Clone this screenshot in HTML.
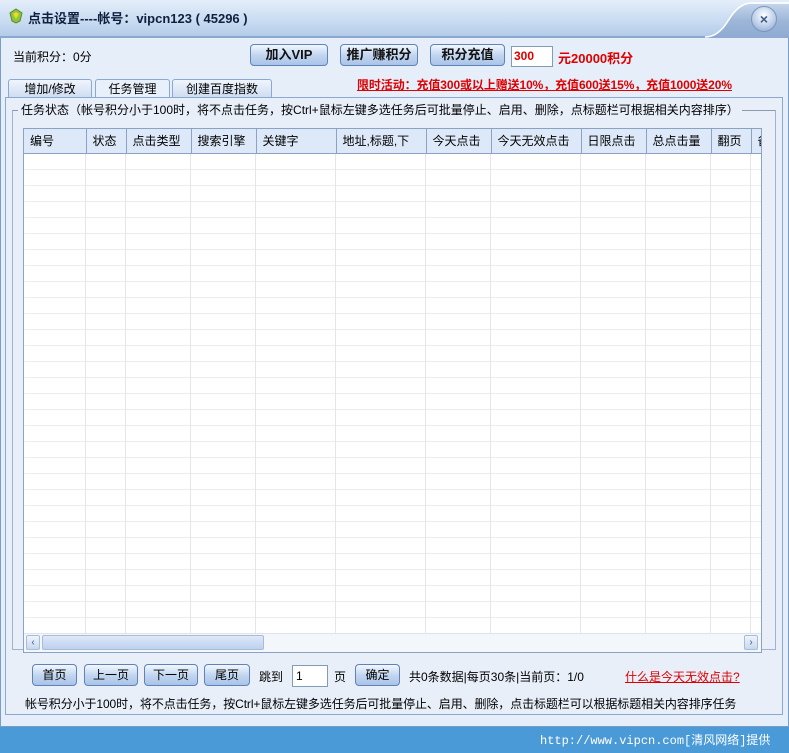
<!DOCTYPE html>
<html><head><meta charset="utf-8">
<style>
*{box-sizing:border-box;margin:0;padding:0}
body{width:789px;height:753px;position:relative;overflow:hidden;background:#4a9ad8;font-family:"Liberation Sans","Noto Sans CJK SC",sans-serif;font-size:12px;color:#000}
.a{position:absolute}
.win{left:0;top:0;width:789px;height:727px;background:#e6eefa;border:1px solid #7a9cc8}
.title{left:0;top:0;width:789px;height:38px;background:linear-gradient(#e4eefa,#c8dbf1 60%,#b4cbe8);border-bottom:2px solid #8aa8d0}
.btn{height:22px;border:1px solid #5f83b8;border-radius:4px;background:linear-gradient(#f2f7fe,#c3d6f0 50%,#a9c3e8);font-weight:bold;font-size:13px;text-align:center;line-height:20px;color:#111}
.pb{height:22px;border:1px solid #5f83b8;border-radius:4px;background:linear-gradient(#f2f7fe,#c3d6f0 50%,#a9c3e8);font-size:12px;text-align:center;line-height:20px}
.tab{top:79px;height:19px;border:1px solid #8aa8d0;border-bottom:none;border-radius:3px 3px 0 0;background:linear-gradient(#f0f5fc,#cddcf1);text-align:center;line-height:18px;font-size:12px}
.red{color:#d00;font-weight:bold}
table{border-collapse:collapse;table-layout:fixed}
td,th{border-right:1px solid #e6e6e6;border-bottom:1px solid #ececec;height:16px;padding:0}
th{height:24px;background:#dde9f9;border-right:1px solid #8aa2c4;border-bottom:1px solid #8aa2c4;font-weight:normal;text-align:left;padding-left:6px;font-size:12px;white-space:nowrap;overflow:hidden}
</style></head><body>
<div class="a win"></div>
<div class="a title"></div>
<svg class="a" style="left:610px;top:0" width="179" height="38"><defs><linearGradient id="g" x1="0" y1="0" x2="0" y2="1"><stop offset="0" stop-color="#c4d4ea"/><stop offset=".5" stop-color="#9db6d8"/><stop offset="1" stop-color="#8eaad2"/></linearGradient></defs><path d="M0 38 L95 38 Q108 38 118 22 Q128 5 140 4 L179 4 L179 38 Z" fill="url(#g)"/><path d="M95 37 Q108 37 118 21 Q128 4 140 3 L179 3" stroke="#fff" stroke-width="1.5" fill="none"/></svg>
<div class="a" style="left:751px;top:6px;width:26px;height:26px;border-radius:50%;background:radial-gradient(circle at 50% 35%,#fff,#b7cbe6 60%,#7f9cc6);border:1px solid #7a96c0;text-align:center;line-height:24px;font-weight:bold;color:#3b5a8a;font-size:14px">×</div>
<svg class="a" style="left:9px;top:8px" width="14" height="16"><path d="M7 1 L13 5 L11 13 L7 15 L3 13 L1 5Z" fill="#8cc63a" stroke="#5a8a20"/><path d="M7 4 L10 6 L7 11 L4 6Z" fill="#f4d23c"/></svg>
<div class="a" style="left:28px;top:8px;font-size:13px;font-weight:bold;color:#102040">点击设置----帐号：vipcn123 ( 45296 )</div>
<div class="a" style="left:13px;top:48px">当前积分：0分</div>
<div class="a btn" style="left:250px;top:44px;width:78px">加入VIP</div>
<div class="a btn" style="left:340px;top:44px;width:78px">推广赚积分</div>
<div class="a btn" style="left:430px;top:44px;width:75px">积分充值</div>
<div class="a" style="left:511px;top:46px;width:42px;height:21px;background:#fff;border:1px solid #7f9db9;color:#d00;font-weight:bold;padding:2px 2px;font-size:12px">300</div>
<div class="a red" style="left:558px;top:48px;font-size:13px">元20000积分</div>
<div class="a tab" style="left:8px;width:84px">增加/修改</div>
<div class="a tab" style="left:95px;width:75px;background:#e8f0fb">任务管理</div>
<div class="a tab" style="left:172px;width:100px">创建百度指数</div>
<div class="a red" style="left:357px;top:76px;text-decoration:underline;font-size:12px;letter-spacing:-.1px">限时活动：充值300或以上赠送10%，充值600送15%，充值1000送20%</div>
<div class="a" style="left:5px;top:97px;width:778px;height:618px;border:1px solid #8aa8d0;background:#e8eff9"></div>
<div class="a" style="left:12px;top:110px;width:764px;height:540px;border:1px solid #9fb4d2;border-top-color:#8a9ab0"></div>
<div class="a" style="left:18px;top:101px;background:#e8eff9;padding:0 3px;font-size:12px">任务状态（帐号积分小于100时，将不点击任务，按Ctrl+鼠标左键多选任务后可批量停止、启用、删除，点标题栏可根据相关内容排序）</div>
<div class="a" style="left:23px;top:128px;width:739px;height:525px;background:#fff;border:1px solid #8aa2c4;overflow:hidden">
<table style="width:760px">
<tr><th style="width:62px">编号</th><th style="width:40px">状态</th><th style="width:65px">点击类型</th><th style="width:65px">搜索引擎</th><th style="width:80px">关键字</th><th style="width:90px">地址,标题,下</th><th style="width:65px">今天点击</th><th style="width:90px">今天无效点击</th><th style="width:65px">日限点击</th><th style="width:65px">总点击量</th><th style="width:40px">翻页</th><th>备</th></tr>
<tr><td></td><td></td><td></td><td></td><td></td><td></td><td></td><td></td><td></td><td></td><td></td><td></td></tr>
</table>
<div class="a" style="left:0;top:25px;width:760px;height:480px;background:repeating-linear-gradient(#fff 0 15px,#ececec 15px 16px)"></div>
<svg class="a" style="left:0;top:25px" width="740" height="480"><g stroke="#e6e6e6"><line x1="61.5" y1="0" x2="61.5" y2="480"/><line x1="101.5" y1="0" x2="101.5" y2="480"/><line x1="166.5" y1="0" x2="166.5" y2="480"/><line x1="231.5" y1="0" x2="231.5" y2="480"/><line x1="311.5" y1="0" x2="311.5" y2="480"/><line x1="401.5" y1="0" x2="401.5" y2="480"/><line x1="466.5" y1="0" x2="466.5" y2="480"/><line x1="556.5" y1="0" x2="556.5" y2="480"/><line x1="621.5" y1="0" x2="621.5" y2="480"/><line x1="686.5" y1="0" x2="686.5" y2="480"/><line x1="726.5" y1="0" x2="726.5" y2="480"/></g></svg>
<div class="a" style="left:0;top:504px;width:739px;height:19px;background:#f3f6fb;border-top:1px solid #dde4ee"></div>
<div class="a" style="left:2px;top:506px;width:14px;height:15px;border:1px solid #a8bcd8;border-radius:2px;background:linear-gradient(#eef4fc,#c8d8ee);font-size:10px;line-height:13px;text-align:center;color:#3a5a8a">‹</div>
<div class="a" style="left:18px;top:506px;width:222px;height:15px;border:1px solid #a8bcd8;border-radius:2px;background:linear-gradient(#dfe9f8,#bcd0ee)"></div>
<div class="a" style="left:720px;top:506px;width:14px;height:15px;border:1px solid #a8bcd8;border-radius:2px;background:linear-gradient(#eef4fc,#c8d8ee);font-size:10px;line-height:13px;text-align:center;color:#3a5a8a">›</div>
</div>
<div class="a pb" style="left:32px;top:664px;width:45px">首页</div>
<div class="a pb" style="left:84px;top:664px;width:54px">上一页</div>
<div class="a pb" style="left:144px;top:664px;width:54px">下一页</div>
<div class="a pb" style="left:204px;top:664px;width:46px">尾页</div>
<div class="a" style="left:259px;top:668px">跳到</div>
<div class="a" style="left:292px;top:665px;width:36px;height:22px;background:#fff;border:1px solid #7f9db9;padding:3px 3px">1</div>
<div class="a" style="left:334px;top:668px">页</div>
<div class="a pb" style="left:355px;top:664px;width:45px">确定</div>
<div class="a" style="left:409px;top:668px">共0条数据|每页30条|当前页：1/0</div>
<div class="a" style="left:625px;top:668px;color:#d00;text-decoration:underline">什么是今天无效点击?</div>
<div class="a" style="left:25px;top:695px;font-size:12px;letter-spacing:-.1px">帐号积分小于100时，将不点击任务，按Ctrl+鼠标左键多选任务后可批量停止、启用、删除，点击标题栏可以根据标题相关内容排序任务</div>
<div class="a" style="left:0;top:727px;width:789px;height:26px;background:#4a9ad8"></div>
<div class="a" style="left:540px;top:731px;color:#fff;font-family:'Liberation Mono','Noto Sans CJK SC',monospace;font-size:12px">http://www.vipcn.com[清风网络]提供</div>
</body></html>
